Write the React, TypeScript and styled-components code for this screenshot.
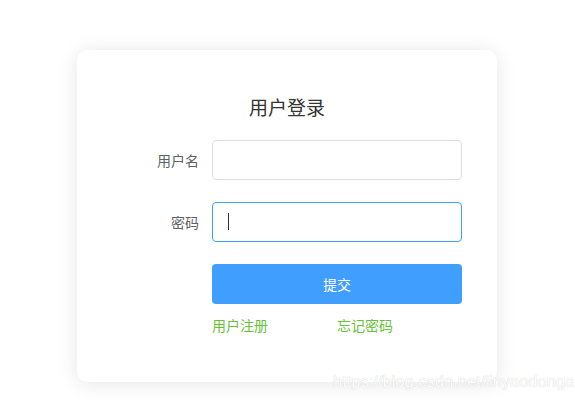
import React from 'react';
import styled, { createGlobalStyle } from 'styled-components';

const GlobalStyle = createGlobalStyle`
  html, body {
    margin: 0;
    padding: 0;
    background: #fff;
    font-family: 'Noto Sans CJK SC', 'Liberation Sans', sans-serif;
  }
  * {
    box-sizing: border-box;
  }
`;

const Page = styled.div`
  position: relative;
  width: 575px;
  height: 406px;
  overflow: hidden;
  padding: 50px 0 0 77px;
`;

const Card = styled.div`
  width: 420px;
  height: 332px;
  padding: 45px 35px 0 20px;
  background: #fff;
  border-radius: 10px;
  box-shadow: 0 2px 20px rgba(0, 0, 0, 0.1);
`;

const Title = styled.h3`
  margin: 0 0 21px 15px;
  height: 24px;
  line-height: 24px;
  text-align: center;
  font-size: 19px;
  font-weight: 400;
  color: #333;
`;

const FormItem = styled.div`
  display: flex;
  align-items: center;
  margin-bottom: 22px;
`;

const Label = styled.label`
  width: 115px;
  padding-right: 13px;
  text-align: right;
  font-size: 14px;
  line-height: 40px;
  color: #606266;
`;

const InputWrap = styled.div<{ $active?: boolean }>`
  position: relative;
  width: 250px;
  height: 40px;

  &::after {
    content: '';
    display: ${(p) => (p.$active ? 'block' : 'none')};
    position: absolute;
    left: 16px;
    top: 11px;
    width: 1px;
    height: 17px;
    background: #333;
  }
`;

const Input = styled.input<{ $active?: boolean }>`
  width: 100%;
  height: 40px;
  padding: 0 15px;
  border: 1px solid ${(p) => (p.$active ? '#409eff' : '#dcdfe6')};
  border-radius: 4px;
  outline: none;
  font-size: 14px;
  color: #606266;
  background: #fff;
`;

const SubmitButton = styled.button`
  width: 250px;
  height: 40px;
  border: none;
  border-radius: 4px;
  background: #409eff;
  color: #fff;
  font-family: inherit;
  font-size: 14px;
  cursor: pointer;
`;

const LinkRow = styled.div`
  display: grid;
  grid-template-columns: 125px 125px;
  margin-left: 115px;
  margin-top: -15px;
  line-height: 28px;
`;

const TextLink = styled.a`
  font-size: 14px;
  color: #67c23a;
  text-decoration: none;
`;

const Watermark = styled.div`
  position: absolute;
  left: 333px;
  top: 372px;
  font-family: 'Liberation Sans', Arial, sans-serif;
  font-size: 16.5px;
  color: #fdfdfd;
  text-shadow: 0 0 1px #c4c4c4;
  white-space: nowrap;
`;

const App: React.FC = () => {
  return (
    <Page>
      <GlobalStyle />
      <Card>
        <Title>用户登录</Title>
        <FormItem>
          <Label>用户名</Label>
          <InputWrap>
            <Input type="text" />
          </InputWrap>
        </FormItem>
        <FormItem>
          <Label>密码</Label>
          <InputWrap $active>
            <Input type="password" $active />
          </InputWrap>
        </FormItem>
        <FormItem>
          <Label />
          <SubmitButton>提交</SubmitButton>
        </FormItem>
        <LinkRow>
          <TextLink href="#">用户注册</TextLink>
          <TextLink href="#">忘记密码</TextLink>
        </LinkRow>
      </Card>
      <Watermark>https://blog.csdn.net/linyaodonga</Watermark>
    </Page>
  );
};

export default App;
